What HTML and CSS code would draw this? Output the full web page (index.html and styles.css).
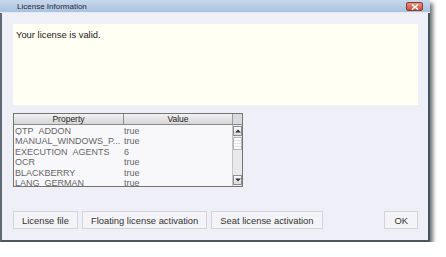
FILE: index.html
```html
<!DOCTYPE html>
<html lang="en">
<head>
    <meta charset="UTF-8">
    <meta name="viewport" content="width=device-width, initial-scale=1.0">
    <title>License Information</title>
    <link rel="stylesheet" href="styles.css">
</head>
<body>

<div class="window">
    <div class="titlebar">
        <span class="title">License Information</span>
        <span class="close">
            <svg width="8" height="6" viewBox="0 0 8 6"><path d="M1 0.5 L7 5.5 M7 0.5 L1 5.5" stroke="#fff" stroke-width="1.6"/></svg>
        </span>
    </div>

    <div class="panel">
        <div class="message">Your license is valid.</div>

        <div class="props">
            <div class="props-head">
                <div class="head-cell col-name">Property</div>
                <div class="head-cell col-value">Value</div>
                <div class="head-corner"></div>
            </div>
            <div class="props-body">
                <div class="rows">
                    <div class="row"><span class="col-name">QTP_ADDON</span><span class="col-value">true</span></div>
                    <div class="row"><span class="col-name">MANUAL_WINDOWS_P...</span><span class="col-value">true</span></div>
                    <div class="row"><span class="col-name">EXECUTION_AGENTS</span><span class="col-value">6</span></div>
                    <div class="row"><span class="col-name">OCR</span><span class="col-value">true</span></div>
                    <div class="row"><span class="col-name">BLACKBERRY</span><span class="col-value">true</span></div>
                    <div class="row"><span class="col-name">LANG_GERMAN</span><span class="col-value">true</span></div>
                </div>
                <div class="scrollbar">
                    <div class="scroll-btn"><svg width="6" height="4" viewBox="0 0 6 4"><path d="M0 3.5 L3 0.5 L6 3.5 Z" fill="#333"/></svg></div>
                    <div class="thumb"></div>
                    <div class="track"></div>
                    <div class="scroll-btn"><svg width="6" height="4" viewBox="0 0 6 4"><path d="M0 0.5 L3 3.5 L6 0.5 Z" fill="#333"/></svg></div>
                </div>
            </div>
        </div>

        <div class="buttons">
            <button class="btn">License file</button>
            <button class="btn">Floating license activation</button>
            <button class="btn">Seat license activation</button>
            <button class="btn btn-ok">OK</button>
        </div>
    </div>
</div>

</body>
</html>
```

FILE: styles.css
```css
body {
    margin: 0;
    padding: 0;
    background-color: #ffffff;
    font-family: "Liberation Sans", Arial, sans-serif;
}
.window {
    box-sizing: border-box;
    width: 430px;
    height: 242px;
    border-left: 2px solid #5f6a74;
    border-right: 2px solid #3d5864;
    border-bottom: 2px solid #4e5862;
    background-color: #f6f6fa;
    box-shadow: 3px 3px 4px rgba(0, 0, 0, 0.55);
    display: flex;
    flex-direction: column;
}
.titlebar {
    height: 12px;
    margin: 0 -2px;
    padding: 0 5px 0 17px;
    display: flex;
    align-items: center;
    justify-content: space-between;
    background: linear-gradient(#c9d9ec, #a9c2de);
    border-bottom: 1px solid #e4ebf4;
}
.title {
    font-size: 8px;
    color: #1b2838;
}
.close {
    box-sizing: border-box;
    width: 17px;
    height: 9px;
    margin-top: 1px;
    margin-right: 2px;
    border: 1px solid #8c3a2c;
    border-radius: 2px;
    background: linear-gradient(#e8907e, #c5503e);
    display: flex;
    align-items: center;
    justify-content: center;
}
.panel {
    flex: 1;
    background-color: #efeff8;
    padding: 11px 10px 0 11px;
    display: flex;
    flex-direction: column;
}
.message {
    height: 81px;
    box-sizing: border-box;
    padding: 5px 3px;
    background-color: #fffff4;
    font-size: 9.4px;
    color: #222;
}
.props {
    margin-top: 8px;
    width: 230px;
    height: 74px;
    box-sizing: border-box;
    border: 1px solid #747474;
    background-color: #f8f8fa;
    display: flex;
    flex-direction: column;
}
.props-head {
    display: flex;
    height: 10px;
    border-bottom: 1px solid #8a8a8a;
}
.head-cell {
    box-sizing: border-box;
    font-size: 8.5px;
    line-height: 10px;
    text-align: center;
    color: #222;
    background: linear-gradient(#f2f2f2, #d6d6d6);
}
.col-name {
    width: 109px;
    flex-shrink: 0;
}
.col-value {
    width: 109px;
    flex-shrink: 0;
}
.head-cell.col-name {
    border-right: 1px solid #8a8a8a;
    width: 110px;
}
.head-cell.col-value {
    width: 108px;
}
.head-corner {
    flex: 1;
    background-color: #d7dbdf;
    border-left: 1px solid #9a9a9a;
}
.props-body {
    flex: 1;
    display: flex;
    overflow: hidden;
}
.rows {
    flex: 1;
    overflow: hidden;
}
.row {
    display: flex;
    height: 10.4px;
    font-size: 9px;
    line-height: 13px;
    color: #666;
    overflow: hidden;
}
.row .col-name {
    width: 110px;
    padding-left: 1px;
    box-sizing: border-box;
    white-space: nowrap;
}
.row .col-value {
    width: 108px;
}
.scrollbar {
    width: 10px;
    flex-shrink: 0;
    display: flex;
    flex-direction: column;
    background-color: #e9e9eb;
    border-left: 1px solid #c4c4c4;
    box-sizing: border-box;
}
.scroll-btn {
    height: 8px;
    margin: 1px 0;
    border: 1px solid #8f8f8f;
    background: linear-gradient(#fafafa, #dcdcdc);
    display: flex;
    align-items: center;
    justify-content: center;
}
.thumb {
    height: 13px;
    border: 1px solid #b4b4b4;
    box-sizing: border-box;
    background: repeating-linear-gradient(#fbfbfb 0 2px, #e2e2e2 2px 3px);
}
.track {
    flex: 1;
}
.buttons {
    margin-top: 24px;
    display: flex;
    gap: 4px;
}
.btn {
    height: 18px;
    padding: 0 8px;
    margin: 0;
    border: 1px solid #d2d2da;
    background-color: #f4f4f8;
    font-family: "Liberation Sans", Arial, sans-serif;
    font-size: 9.4px;
    color: #333;
}
.btn-ok {
    margin-left: auto;
    padding: 0 9px;
}
```
